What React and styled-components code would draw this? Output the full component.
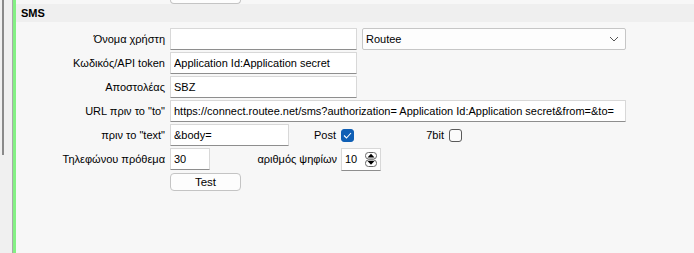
import React from "react";
import styled, { createGlobalStyle } from "styled-components";

const Global = createGlobalStyle`
  html, body { margin: 0; padding: 0; }
  body {
    font-family: "Liberation Sans", Arial, sans-serif;
    font-size: 11px;
    color: #000;
    background: #f7f7f7;
  }
`;

const Page = styled.div`
  display: flex;
  width: 694px;
  height: 253px;
  overflow: hidden;
`;

const Gutter = styled.div`
  width: 12px;
  background: #f0f0f0;
  display: flex;
  flex-direction: column;
`;

const Thumb = styled.div`
  margin-left: 2px;
  width: 2px;
  height: 155px;
  background: #8a8a8a;
`;

const Divider = styled.div`
  width: 1px;
  background: #a8a8a8;
`;

const Accent = styled.div`
  width: 3px;
  background: #84f084;
`;

const Content = styled.div`
  flex: 1;
  display: flex;
  flex-direction: column;
  background: #f7f7f7;
`;

const TopStrip = styled.div`
  height: 4px;
  display: flex;
`;

const PrevButton = styled.div`
  margin-left: 154px;
  width: 69px;
  height: 3px;
  background: #fdfdfd;
  border: 1px solid #c4c4c4;
  border-top: none;
  border-radius: 0 0 4px 4px;
`;

const Header = styled.div`
  height: 18px;
  background: #efefef;
  display: flex;
  align-items: center;
  padding-left: 5px;
  font-weight: bold;
  font-size: 11px;
`;

const Form = styled.div`
  margin-top: 6px;
  display: flex;
  flex-direction: column;
  gap: 2px;
`;

const Row = styled.div`
  display: flex;
  align-items: ${(p) => p.$align || "center"};
  height: 22px;
`;

const Label = styled.div`
  width: ${(p) => p.$w}px;
  text-align: right;
  white-space: nowrap;
  padding-right: ${(p) => (p.$pad ?? 5)}px;
  box-sizing: border-box;
  flex: none;
`;

const TextBox = styled.input`
  box-sizing: border-box;
  width: ${(p) => p.$w}px;
  height: 22px;
  margin: 0;
  padding: 0 2px 0 3px;
  font: inherit;
  color: #000;
  background: #fff;
  border: 1px solid #d8d8d8;
  border-bottom-color: #8e8e8e;
  border-radius: 1px;
  outline: none;
  flex: none;
`;

const Select = styled.div`
  box-sizing: border-box;
  margin-left: 5px;
  width: 264px;
  height: 22px;
  display: flex;
  align-items: center;
  justify-content: space-between;
  padding: 0 6px 0 3px;
  background: #fdfdfd;
  border: 1px solid #c6c6c6;
  border-radius: 2px;
`;

const Check = styled.div`
  box-sizing: border-box;
  width: 13px;
  height: 13px;
  border-radius: 3px;
  flex: none;
  display: flex;
  align-items: center;
  justify-content: center;
  background: ${(p) => (p.$on ? "#0f5fb5" : "#fbfbfb")};
  border: 1px solid ${(p) => (p.$on ? "#0f5fb5" : "#5a5a5a")};
`;

const Spin = styled.div`
  box-sizing: border-box;
  width: 40px;
  height: 23px;
  display: flex;
  align-items: center;
  justify-content: space-between;
  padding: 0 3px 0 3px;
  background: #fff;
  border: 1px solid #d8d8d8;
  border-bottom-color: #8e8e8e;
  flex: none;
`;

const Button = styled.button`
  box-sizing: border-box;
  margin: 1px 0 0 154px;
  width: 71px;
  height: 18px;
  padding: 0;
  font: inherit;
  font-size: 11.5px;
  color: #000;
  background: #fdfdfd;
  border: 1px solid #c4c4c4;
  border-radius: 4px;
`;

export default function App() {
  return (
    <>
      <Global />
      <Page>
        <Gutter>
          <Thumb />
        </Gutter>
        <Divider />
        <Accent />
        <Content>
          <TopStrip>
            <PrevButton />
          </TopStrip>
          <Header>SMS</Header>
          <Form>
            <Row>
              <Label $w={154}>Όνομα χρήστη</Label>
              <TextBox $w={187} value="" readOnly />
              <Select>
                <span>Routee</span>
                <svg width="10" height="6" viewBox="0 0 10 6">
                  <path d="M1 1 L5 5 L9 1" fill="none" stroke="#555" strokeWidth="1" />
                </svg>
              </Select>
            </Row>
            <Row>
              <Label $w={154}>Κωδικός/API token</Label>
              <TextBox $w={187} value="Application Id:Application secret" readOnly />
            </Row>
            <Row>
              <Label $w={154}>Αποστολέας</Label>
              <TextBox $w={187} value="SBZ" readOnly />
            </Row>
            <Row>
              <Label $w={154}>URL πριν το "to"</Label>
              <TextBox
                $w={456}
                value="https://connect.routee.net/sms?authorization= Application Id:Application secret&from=&to="
                readOnly
              />
            </Row>
            <Row>
              <Label $w={154}>πριν το "text"</Label>
              <TextBox $w={119} value="&body=" readOnly />
              <Label $w={52}>Post</Label>
              <Check $on>
                <svg width="9" height="7" viewBox="0 0 9 7">
                  <path d="M1 3.5 L3.5 6 L8 1" fill="none" stroke="#fff" strokeWidth="1.1" />
                </svg>
              </Check>
              <Label $w={95}>7bit</Label>
              <Check />
            </Row>
            <Row>
              <Label $w={154}>Τηλεφώνου πρόθεμα</Label>
              <TextBox $w={40} value="30" readOnly />
              <Label $w={131} $pad={4}>αριθμός ψηφίων</Label>
              <Spin>
                <span>10</span>
                <svg width="12" height="15" viewBox="0 0 12 15">
                  <rect x="0.5" y="0.5" width="11" height="6.5" rx="3" fill="#fff" stroke="#6a6a6a" />
                  <path d="M2.5 5.5 L6 1.8 L9.5 5.5 Z" fill="#000" />
                  <rect x="0.5" y="8" width="11" height="6.5" rx="3" fill="#fff" stroke="#6a6a6a" />
                  <path d="M2.5 9 L6 12.7 L9.5 9 Z" fill="#000" />
                </svg>
              </Spin>
            </Row>
            <Row $align="flex-start">
              <Button>Test</Button>
            </Row>
          </Form>
        </Content>
      </Page>
    </>
  );
}
